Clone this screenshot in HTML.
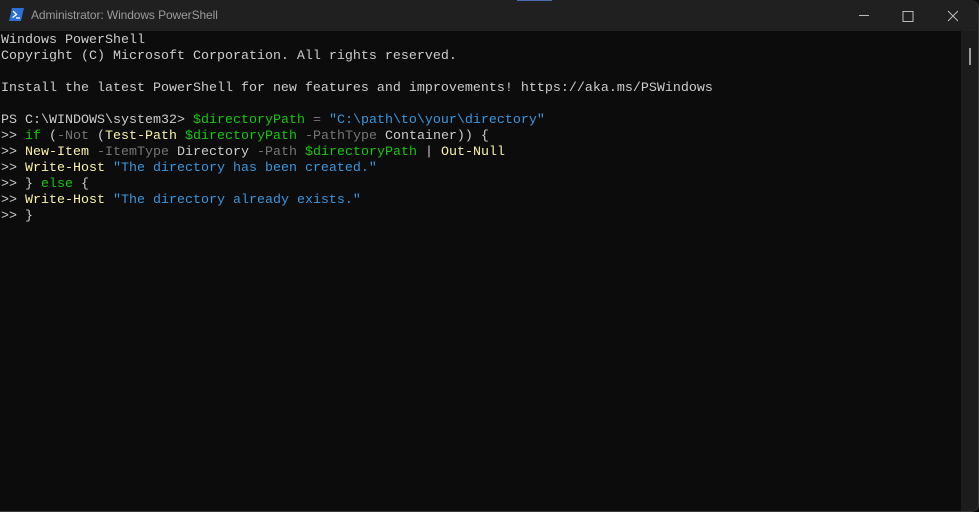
<!DOCTYPE html>
<html><head><meta charset="utf-8"><style>
html,body{margin:0;padding:0;background:#0c0c0c;width:979px;height:512px;overflow:hidden}
.win{position:absolute;left:0;top:0;width:978px;height:511px;background:#0c0c0c;border:1px solid #3a3a3a;border-top:none;border-left:none;border-radius:0 8px 8px 0;overflow:hidden}
.title{position:absolute;left:0;top:0;width:979px;height:31px;background:#202020}
.title .t{position:absolute;left:31px;top:8px;font:12px "Liberation Sans",sans-serif;color:#9a9a9a;letter-spacing:-0.1px}
.hl{position:absolute;left:517px;top:0;width:35px;height:1px;background:#4a6ab0}
.sb{position:absolute;left:961px;top:31px;width:18px;height:481px;background:#1c1c1c}
.thumb{position:absolute;left:969px;top:48px;width:2px;height:17px;background:#9a9a9a}
pre{position:absolute;left:1px;top:33px;margin:0;font:13.33px/16px "Liberation Mono",monospace;color:#cccccc}
.y{color:#f9f1a5}.g{color:#16c60c}.d{color:#767676}.b{color:#3a96dd}
</style></head><body><div class="win">
<div class="title"><div class="hl"></div>
<svg style="position:absolute;left:9px;top:8px" width="15" height="13" viewBox="0 0 15 13"><path d="M3 0H15L12 13H0Z" fill="#2d6fd6"/><path d="M4 3L7.5 6.5L3.5 9.5" stroke="#fff" stroke-width="1.4" fill="none"/><path d="M7 10H11" stroke="#fff" stroke-width="1.3"/></svg>
<div class="t">Administrator: Windows PowerShell</div>
<svg style="position:absolute;left:858px;top:10px" width="100" height="12"><path d="M1 5.5H11" stroke="#bbb"/><path d="M45 1.5h10v10h-10z" stroke="#bbb" fill="none"/><path d="M90 1L100 11M100 1L90 11" stroke="#bbb"/></svg>
</div>
<div class="sb"></div><div class="thumb"></div>
<pre>Windows PowerShell
Copyright (C) Microsoft Corporation. All rights reserved.

Install the latest PowerShell for new features and improvements! https://aka.ms/PSWindows

PS C:\WINDOWS\system32&gt; <span class="g">$directoryPath</span> <span class="d">=</span> <span class="b">"C:\path\to\your\directory"</span>
&gt;&gt; <span class="g">if</span> (<span class="d">-Not</span> (<span class="y">Test-Path</span> <span class="g">$directoryPath</span> <span class="d">-PathType</span> Container)) {
&gt;&gt; <span class="y">New-Item</span> <span class="d">-ItemType</span> Directory <span class="d">-Path</span> <span class="g">$directoryPath</span> | <span class="y">Out-Null</span>
&gt;&gt; <span class="y">Write-Host</span> <span class="b">"The directory has been created."</span>
&gt;&gt; } <span class="g">else</span> {
&gt;&gt; <span class="y">Write-Host</span> <span class="b">"The directory already exists."</span>
&gt;&gt; }</pre>
</div></body></html>
